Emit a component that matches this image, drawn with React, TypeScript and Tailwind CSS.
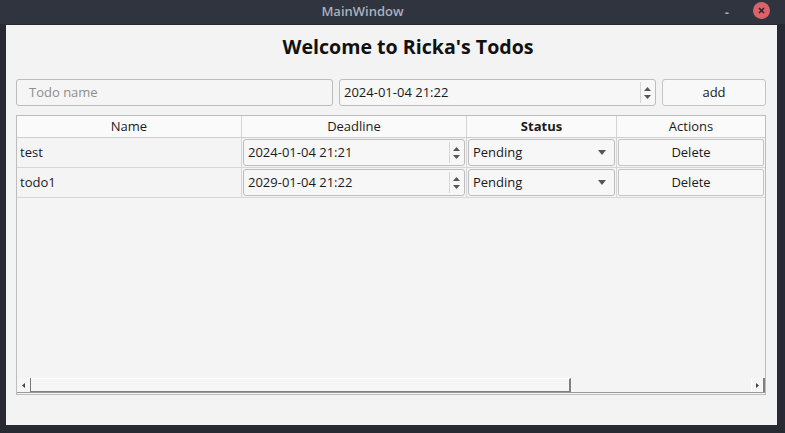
import React from "react";

type Todo = {
  name: string;
  deadline: string;
};

const todos: Todo[] = [
  { name: "test", deadline: "2024-01-04 21:21" },
  { name: "todo1", deadline: "2029-01-04 21:22" },
];

const SpinArrows = () => (
  <div className="flex flex-col items-center justify-center w-[14px] h-full border-l border-[#d6d6d6] gap-[4px]">
    <svg width="7" height="4" viewBox="0 0 7 4">
      <path d="M0 4 L3.5 0 L7 4 Z" fill="#555" />
    </svg>
    <svg width="7" height="4" viewBox="0 0 7 4">
      <path d="M0 0 L3.5 4 L7 0 Z" fill="#555" />
    </svg>
  </div>
);

const DateEdit = ({ value, className }: { value: string; className?: string }) => (
  <div
    className={
      "flex items-stretch bg-[#f7f7f7] border border-[#bdbdbd] rounded-[3px] " +
      (className ?? "")
    }
  >
    <div className="flex-1 flex items-center pl-[4px] text-[13px] text-[#1a1a1a]">
      {value}
    </div>
    <div className="py-[2px] pr-[1px]">
      <SpinArrows />
    </div>
  </div>
);

const App = () => {
  return (
    <div className="w-[785px] h-[433px] bg-[#272a33] flex flex-col font-['Open_Sans','Noto_Sans',sans-serif] overflow-hidden">
      <div className="relative h-[24px] bg-[#2f343f] flex items-center justify-center">
        <span className="text-[13px] font-semibold text-[#a9b0bc] ml-[-60px]">
          MainWindow
        </span>
        <span className="absolute left-[725px] top-[4px] text-[#a9b0bc] text-[12px] font-bold">
          -
        </span>
        <div className="absolute left-[753px] top-[2px] w-[17px] h-[17px] rounded-full bg-[#d8646a] flex items-center justify-center">
          <svg width="7" height="7" viewBox="0 0 7 7">
            <path d="M1 1 L6 6 M6 1 L1 6" stroke="#3a2226" strokeWidth="1.6" />
          </svg>
        </div>
      </div>

      <div className="flex flex-1 pl-[6px] pr-[8px] pb-[8px] pt-[1px]">
        <div className="flex-1 bg-[#f3f3f3] flex flex-col px-[10px] pr-[11px] pb-[30px]">
          <h1 className="text-center text-[19.6px] font-bold text-[#111] mt-[8px] h-[28px] leading-[28px] pl-[34px]">
            Welcome to Ricka's Todos
          </h1>

          <div className="flex items-stretch gap-[6px] mt-[18px] h-[27px]">
            <div className="w-[317px] bg-[#f5f5f5] border border-[#bcbcbc] rounded-[3px] flex items-center pl-[12px] text-[13px] text-[#8e8e8e]">
              Todo name
            </div>
            <DateEdit value="2024-01-04 21:22" className="w-[317px]" />
            <button className="flex-1 bg-[#f8f8f8] border border-[#c4c4c4] rounded-[3px] text-[13px] text-[#1a1a1a]">
              add
            </button>
          </div>

          <div className="mt-[9px] flex-1 border border-[#bdbdbd] bg-[#f4f4f4] flex flex-col">
            <div className="grid grid-cols-[225px_225px_150px_1fr] h-[22px] text-[13px] text-[#1a1a1a] bg-[#fafafa] border-b border-[#cfcfcf]">
              <div className="flex items-center justify-center border-r border-[#d4d4d4]">Name</div>
              <div className="flex items-center justify-center border-r border-[#d4d4d4]">Deadline</div>
              <div className="flex items-center justify-center border-r border-[#d4d4d4] font-bold">Status</div>
              <div className="flex items-center justify-center">Actions</div>
            </div>

            {todos.map((todo) => (
              <div
                key={todo.name}
                className="grid grid-cols-[225px_225px_150px_1fr] h-[30px] text-[13px] text-[#1a1a1a] border-b border-[#d6d6d6]"
              >
                <div className="flex items-center pl-[3px] border-r border-[#d6d6d6]">
                  {todo.name}
                </div>
                <div className="border-r border-[#d6d6d6] p-[1px]">
                  <DateEdit value={todo.deadline} className="h-full" />
                </div>
                <div className="border-r border-[#d6d6d6] p-[1px]">
                  <div className="h-full bg-[#f7f7f7] border border-[#bdbdbd] rounded-[3px] flex items-center justify-between pl-[4px] pr-[8px]">
                    <span>Pending</span>
                    <svg width="8" height="5" viewBox="0 0 8 5">
                      <path d="M0 0 L4 5 L8 0 Z" fill="#555" />
                    </svg>
                  </div>
                </div>
                <div className="p-[1px]">
                  <button className="w-full h-full bg-[#f8f8f8] border border-[#c4c4c4] rounded-[2px]">
                    Delete
                  </button>
                </div>
              </div>
            ))}

            <div className="flex-1" />

            <div className="flex items-stretch h-[15px] mb-[1px] border-b border-[#9a9a9a]">
              <div className="w-[14px] flex items-center justify-center border-r border-[#7a7a7a] bg-[#f6f6f6]">
                <svg width="3" height="5" viewBox="0 0 3 5">
                  <path d="M3 0 L0 2.5 L3 5 Z" fill="#444" />
                </svg>
              </div>
              <div className="w-[540px] bg-[#f6f6f6] border-t border-white border-r-2 border-r-[#808080] border-b border-b-[#808080]" />
              <div className="flex-1" />
              <div className="w-[14px] flex items-center justify-center border-l border-white border-r-2 border-r-[#808080] bg-[#f6f6f6]">
                <svg width="3" height="5" viewBox="0 0 3 5">
                  <path d="M0 0 L3 2.5 L0 5 Z" fill="#444" />
                </svg>
              </div>
            </div>
          </div>
        </div>
      </div>
    </div>
  );
};

export default App;
